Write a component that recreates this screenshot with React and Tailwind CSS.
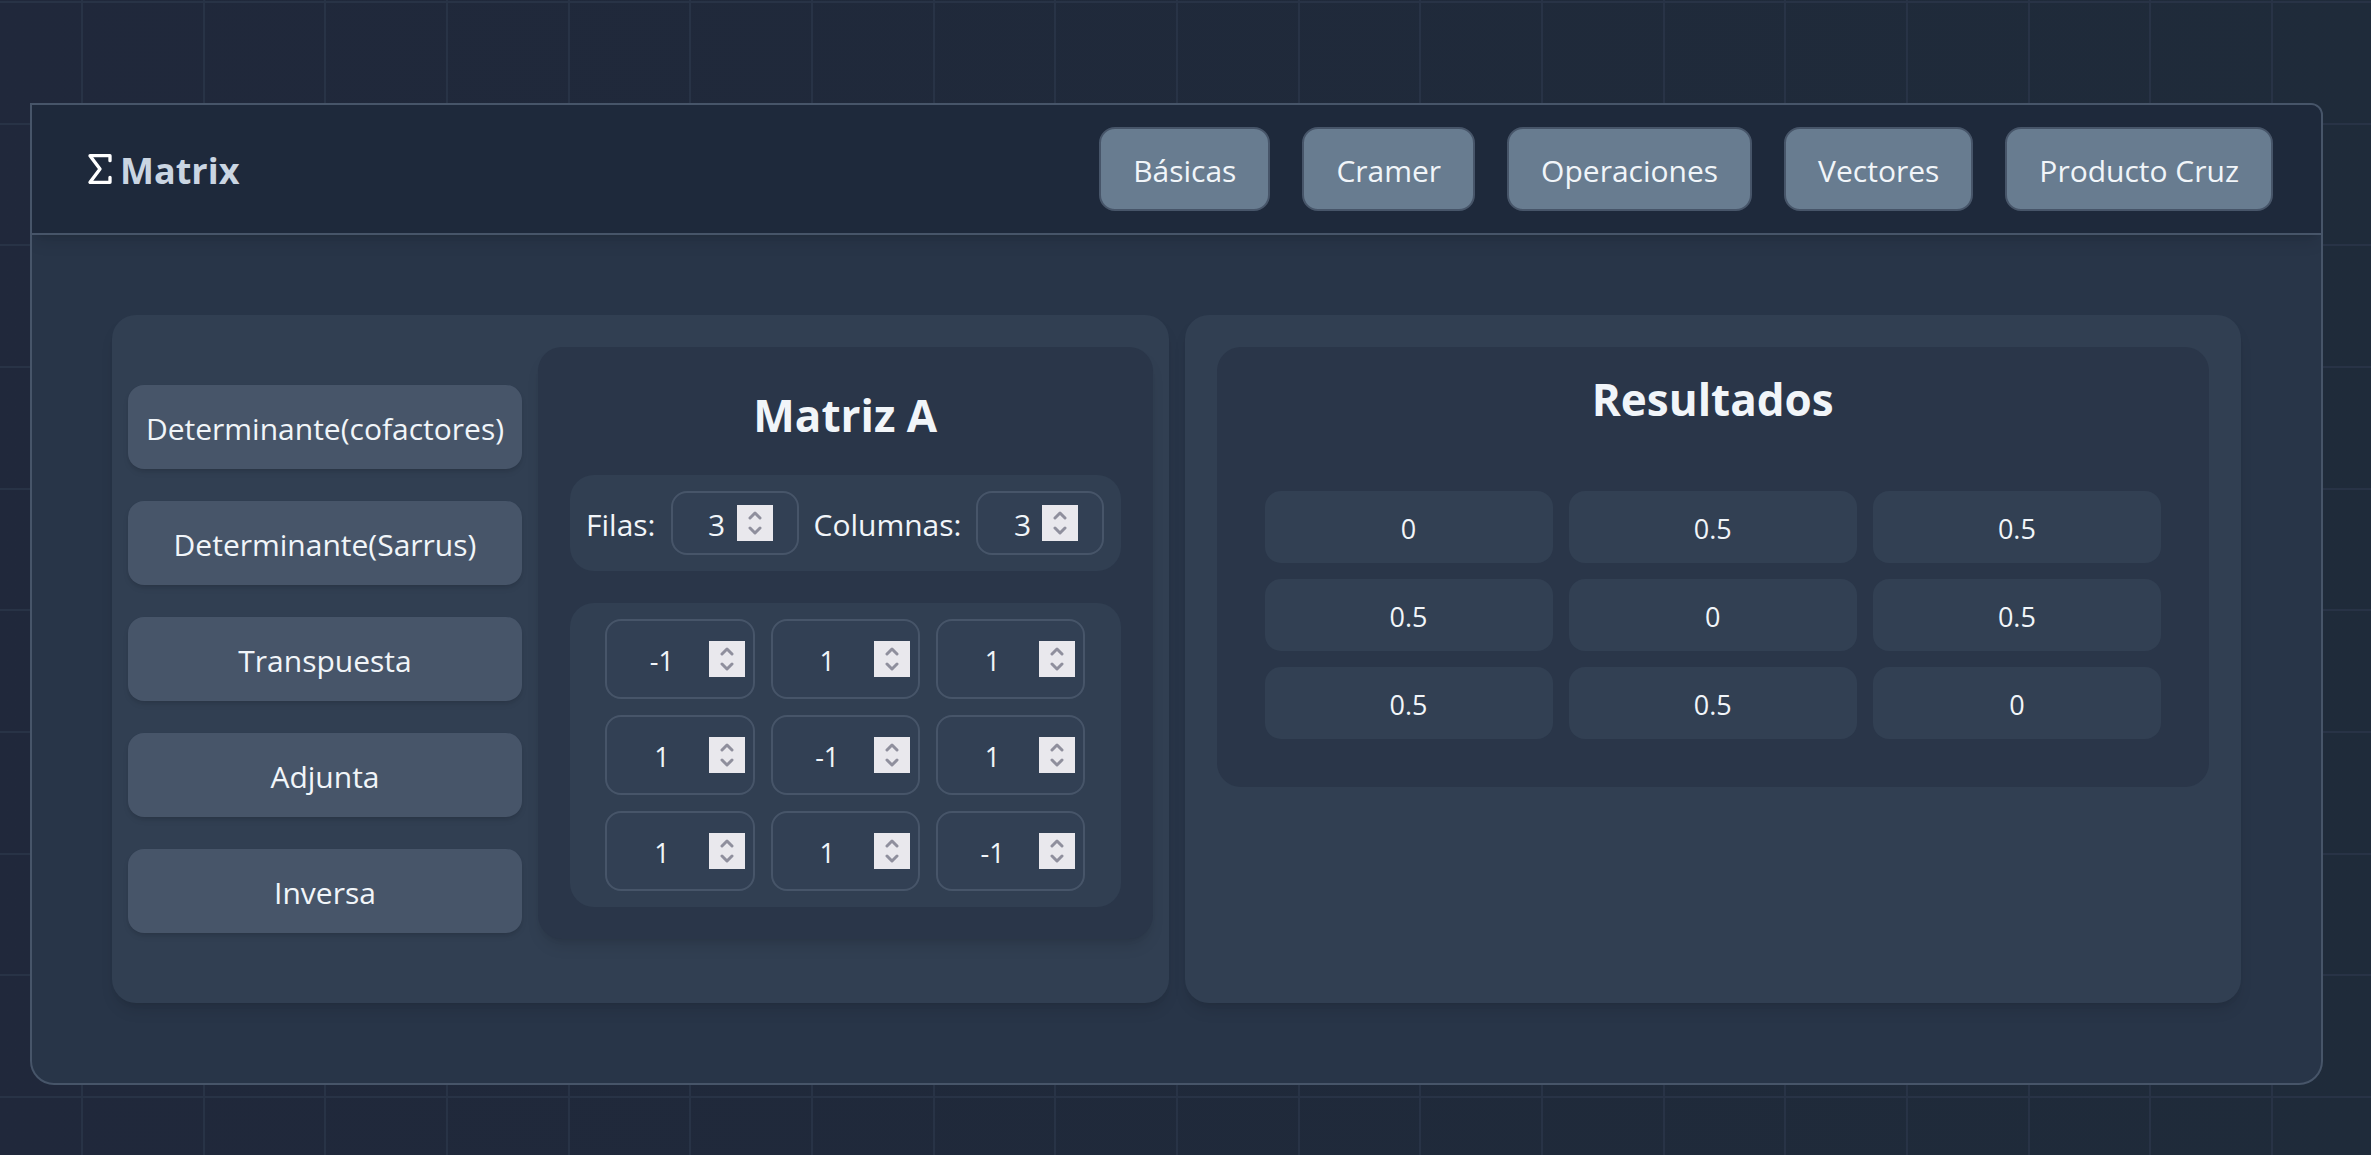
import React, { useState } from "react";

const navItems = ["Básicas", "Cramer", "Operaciones", "Vectores", "Producto Cruz"];

const operations = [
  "Determinante(cofactores)",
  "Determinante(Sarrus)",
  "Transpuesta",
  "Adjunta",
  "Inversa",
];

const initialMatrix = [
  [-1, 1, 1],
  [1, -1, 1],
  [1, 1, -1],
];

const results = [
  [0, 0.5, 0.5],
  [0.5, 0, 0.5],
  [0.5, 0.5, 0],
];

const SigmaIcon = () => (
  <svg
    width="40"
    height="40"
    viewBox="0 0 24 24"
    fill="none"
    stroke="white"
    strokeWidth="2"
    strokeLinecap="round"
    strokeLinejoin="round"
    aria-hidden="true"
  >
    <path d="M18 7V4H6l6 8-6 8h12v-3" />
  </svg>
);

const GridBackground = () => (
  <svg className="absolute inset-0 w-full h-full" aria-hidden="true">
    <defs>
      <pattern id="grid" x="81" y="1" width="365" height="365" patternUnits="userSpaceOnUse">
        <path
          d="M1 0V365M123 0V365M244 0V365M0 1H365M0 123H365M0 244H365"
          fill="none"
          stroke="#283346"
          strokeWidth="2"
        />
      </pattern>
    </defs>
    <rect width="100%" height="100%" fill="url(#grid)" />
  </svg>
);

const NumberField = ({ id, label, value, onChange, className, inputClassName = "" }) => (
  <div
    className={`flex items-center border-2 border-[#475569] rounded-2xl bg-[#334155]/50 ${className}`}
  >
    <input
      id={id}
      aria-label={label}
      type="number"
      value={value}
      onChange={(e) => onChange(Number(e.target.value))}
      className={`flex-1 min-w-0 pt-1 text-center bg-transparent outline-none [appearance:textfield] [&::-webkit-inner-spin-button]:appearance-none ${inputClassName}`}
    />
    <div className="w-9 h-9 py-0.5 bg-[#e9e8ed] flex flex-col">
      <button
        type="button"
        aria-label="Aumentar"
        onClick={() => onChange(value + 1)}
        className="flex-1 flex items-center justify-center"
      >
        <svg width="14" height="10" viewBox="0 0 14 10" fill="none" stroke="#8f8f9d" strokeWidth="3">
          <path d="M2 8L7 3L12 8" strokeLinecap="round" strokeLinejoin="round" />
        </svg>
      </button>
      <button
        type="button"
        aria-label="Disminuir"
        onClick={() => onChange(value - 1)}
        className="flex-1 flex items-center justify-center"
      >
        <svg width="14" height="10" viewBox="0 0 14 10" fill="none" stroke="#8f8f9d" strokeWidth="3">
          <path d="M2 2L7 7L12 2" strokeLinecap="round" strokeLinejoin="round" />
        </svg>
      </button>
    </div>
  </div>
);

const App = () => {
  const [rows, setRows] = useState(3);
  const [cols, setCols] = useState(3);
  const [matrix, setMatrix] = useState(initialMatrix);

  const updateCell = (r, c, value) => {
    setMatrix(
      matrix.map((row, i) => row.map((cell, j) => (i === r && j === c ? value : cell)))
    );
  };

  return (
    <div className="relative min-h-screen bg-linear-to-r from-[#20283b] to-[#1f2b3a] pt-[103px] pb-[70px] pl-[30px] pr-12 font-['Open_Sans','Noto_Sans',sans-serif] text-[30px] leading-[44px] text-slate-100">
      <GridBackground />

      <div className="relative border-2 border-[#475569] rounded-3xl rounded-tl-none rounded-tr-xl bg-[#283548] overflow-hidden">
        <header className="flex items-center justify-between h-[130px] px-12 bg-[#1e293b] border-b-2 border-[#475569] shadow-lg">
          <div className="flex items-center">
            <SigmaIcon />
            <h1 className="pt-1 text-4xl font-bold text-slate-300">Matrix</h1>
          </div>
          <nav className="flex gap-8">
            {navItems.map((item) => (
              <button
                key={item}
                className="h-[84px] px-8 pt-1 bg-[#687c90] border-2 border-[#475569] rounded-2xl"
              >
                {item}
              </button>
            ))}
          </nav>
        </header>

        <main className="grid grid-cols-2 gap-4 p-20">
          <section className="flex items-start gap-4 pt-8 pb-16 px-4 bg-[#313f52] rounded-3xl shadow-lg">
            <div className="w-[394px] shrink-0 self-center flex flex-col gap-8 mt-8">
              {operations.map((op) => (
                <button
                  key={op}
                  className="h-[84px] pt-1 bg-[#475569] rounded-2xl shadow-md whitespace-nowrap"
                >
                  {op}
                </button>
              ))}
            </div>

            <div className="flex-1 p-8 bg-[#2a3649] rounded-3xl shadow-lg">
              <h2 className="h-24 pt-1 text-center text-[44px] leading-[64px] font-bold">
                Matriz A
              </h2>
              <div className="flex items-center justify-between p-4 bg-[#313f52] rounded-3xl">
                <label htmlFor="rows" className="pt-1">
                  Filas:
                </label>
                <NumberField
                  id="rows"
                  value={rows}
                  onChange={setRows}
                  className="w-32 h-16 px-6"
                />
                <label htmlFor="cols" className="pt-1">
                  Columnas:
                </label>
                <NumberField
                  id="cols"
                  value={cols}
                  onChange={setCols}
                  className="w-32 h-16 px-6"
                />
              </div>
              <div className="mt-8 p-4 bg-[#313f52] rounded-3xl">
                <div className="grid grid-cols-3 gap-4 max-w-[480px] mx-auto">
                  {matrix.map((row, i) =>
                    row.map((cell, j) => (
                      <NumberField
                        key={`${i}-${j}`}
                        label={`Fila ${i + 1}, columna ${j + 1}`}
                        value={cell}
                        onChange={(v) => updateCell(i, j, v)}
                        className="h-20 px-2"
                        inputClassName="text-[27px]"
                      />
                    ))
                  )}
                </div>
              </div>
            </div>
          </section>

          <section className="p-8 bg-[#313f52] rounded-3xl shadow-lg">
            <div className="px-12 pt-4 pb-12 bg-[#2a3649] rounded-3xl">
              <h2 className="h-32 pt-1 text-center text-[44px] leading-[64px] font-bold">
                Resultados
              </h2>
              <div className="grid grid-cols-3 gap-4">
                {results.flat().map((value, i) => (
                  <div
                    key={i}
                    className="h-[72px] pt-1 flex items-center justify-center bg-[#324053] rounded-2xl text-[27px]"
                  >
                    {value}
                  </div>
                ))}
              </div>
            </div>
          </section>
        </main>
      </div>
    </div>
  );
};

export default App;
